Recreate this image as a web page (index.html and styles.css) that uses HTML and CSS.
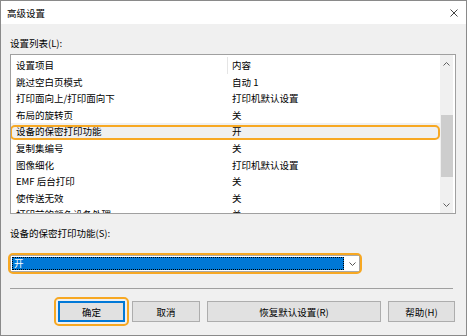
FILE: index.html
```html
<!DOCTYPE html>
<html lang="zh-CN">
<head>
    <meta charset="UTF-8">
    <title>高级设置</title>
    <link rel="stylesheet" href="styles.css">
</head>
<body>
    <div class="window">
        <div class="titlebar">
            <span class="title">高级设置</span>
            <svg class="close" width="8" height="8" viewBox="0 0 8 8"><path d="M0.5 0.5L7.5 7.5M7.5 0.5L0.5 7.5" stroke="#444" stroke-width="1"/></svg>
        </div>

        <div class="content">
            <div class="label label-list">设置列表(L):</div>

            <div class="listbox">
                <div class="rows">
                    <div class="row header"><span class="col-name">设置项目</span><span class="col-value">内容</span></div>
                    <div class="row"><span class="col-name">跳过空白页模式</span><span class="col-value">自动 1</span></div>
                    <div class="row"><span class="col-name">打印面向上/打印面向下</span><span class="col-value">打印机默认设置</span></div>
                    <div class="row"><span class="col-name">布局的旋转页</span><span class="col-value">关</span></div>
                    <div class="row selected"><span class="col-name">设备的保密打印功能</span><span class="col-value">开</span></div>
                    <div class="row"><span class="col-name">复制集编号</span><span class="col-value">关</span></div>
                    <div class="row"><span class="col-name">图像细化</span><span class="col-value">打印机默认设置</span></div>
                    <div class="row"><span class="col-name">EMF 后台打印</span><span class="col-value">关</span></div>
                    <div class="row"><span class="col-name">使传送无效</span><span class="col-value">关</span></div>
                    <div class="row"><span class="col-name">打印前的颜色设备处理</span><span class="col-value">关</span></div>
                </div>
                <div class="scrollbar">
                    <div class="arrow">
                        <svg width="7" height="4" viewBox="0 0 7 4"><path d="M0.5 3.5L3.5 0.5L6.5 3.5" fill="none" stroke="#606060" stroke-width="1"/></svg>
                    </div>
                    <div class="track"><div class="thumb"></div></div>
                    <div class="arrow">
                        <svg width="7" height="4" viewBox="0 0 7 4"><path d="M0.5 0.5L3.5 3.5L6.5 0.5" fill="none" stroke="#606060" stroke-width="1"/></svg>
                    </div>
                </div>
            </div>

            <div class="label label-combo">设备的保密打印功能(S):</div>

            <div class="combo">
                <div class="combo-value">开</div>
                <svg class="chevron" width="7" height="4" viewBox="0 0 7 4"><path d="M0.5 0.5L3.5 3.5L6.5 0.5" fill="none" stroke="#555" stroke-width="1"/></svg>
            </div>

            <div class="separator"></div>

            <div class="buttons">
                <button class="btn btn-ok focused">确定</button>
                <button class="btn btn-cancel">取消</button>
                <button class="btn btn-reset">恢复默认设置(R)</button>
                <button class="btn btn-help">帮助(H)</button>
            </div>
        </div>
    </div>
</body>
</html>
```

FILE: styles.css
```css
/* dialog look */
body {
    margin: 0;
    font-family: "Noto Sans CJK SC", "Liberation Sans", sans-serif;
    font-size: 9.5px;
    color: #000;
}

.window {
    width: 467px;
    height: 336px;
    box-sizing: border-box;
    border: 1px solid #8a8a8a;
    background-color: #f0f0f0;
}

.titlebar {
    height: 23px;
    background-color: #fff;
    display: flex;
    align-items: center;
    justify-content: space-between;
    padding: 0 8px 0 6px;
}

.title {
    line-height: 12px;
}

.content {
    padding: 0 10px 0 9px;
}

.label {
    line-height: 12px;
}

.label-list {
    margin-top: 13px;
}

/* list of settings */
.listbox {
    margin-top: 5px;
    height: 160px;
    box-sizing: border-box;
    border: 1px solid #a0a0a0;
    background-color: #fff;
    display: flex;
    padding-right: 2px;
}

.rows {
    flex: 1;
    overflow: hidden;
    padding-top: 2px;
}

.row {
    position: relative;
    display: flex;
    height: 16.6px;
    line-height: 16.6px;
    white-space: nowrap;
}

.col-name {
    width: 217px;
    box-sizing: border-box;
    padding-left: 5px;
}

.col-value {
    padding-left: 4px;
}

.header .col-name {
    border-right: 1px solid #e5e5e5;
}

.row.selected {
    background-color: #f0f0f0;
}

.row.selected::after {
    content: "";
    position: absolute;
    top: 2px;
    bottom: 0;
    left: -1px;
    right: 0;
    border: 2px solid #f7a823;
    border-radius: 5px;
}

.scrollbar {
    width: 13px;
    background-color: #f0f0f0;
    display: flex;
    flex-direction: column;
}

.arrow {
    height: 17px;
    display: flex;
    align-items: center;
    justify-content: center;
}

.track {
    flex: 1;
    padding-top: 43px;
}

.thumb {
    margin-left: 1px;
    width: 12px;
    height: 62px;
    background-color: #cdcdcd;
}

/* combo box */
.label-combo {
    margin-top: 13px;
}

.combo {
    position: relative;
    margin-top: 16px;
    width: 350px;
    height: 17px;
    box-sizing: border-box;
    border: 1px solid #a8a8a8;
    background-color: #fff;
    display: flex;
    align-items: center;
}

.combo::after {
    content: "";
    position: absolute;
    top: -3px;
    bottom: -3px;
    left: -3px;
    right: -3px;
    border: 2px solid #f7a823;
    border-radius: 5px;
}

.combo-value {
    margin-left: 1px;
    width: 332px;
    height: 13px;
    line-height: 13px;
    box-sizing: border-box;
    padding-left: 2px;
    background-color: #0078d7;
    color: #fff;
    outline: 1px dotted #000;
    outline-offset: -1px;
}

.chevron {
    margin-left: 5px;
}

.separator {
    margin-top: 16px;
    margin-right: 3px;
    height: 1px;
    background-color: #a0a0a0;
}

/* buttons */
.buttons {
    margin-top: 12px;
    display: flex;
    justify-content: flex-end;
    gap: 7px;
    padding-right: 1px;
}

.btn {
    position: relative;
    height: 21px;
    box-sizing: border-box;
    border: 1px solid #adadad;
    background-color: #e1e1e1;
    font-family: inherit;
    font-size: 9.5px;
    color: #000;
    padding: 0;
}

.btn-ok { width: 67px; }
.btn-cancel { width: 68px; }
.btn-reset { width: 174px; }
.btn-help { width: 67px; }

.btn.focused {
    border: 2px solid #0078d7;
}

.btn.focused::after {
    content: "";
    position: absolute;
    top: -6px;
    bottom: -6px;
    left: -6px;
    right: -6px;
    border: 2px solid #f7a823;
    border-radius: 5px;
}
```
